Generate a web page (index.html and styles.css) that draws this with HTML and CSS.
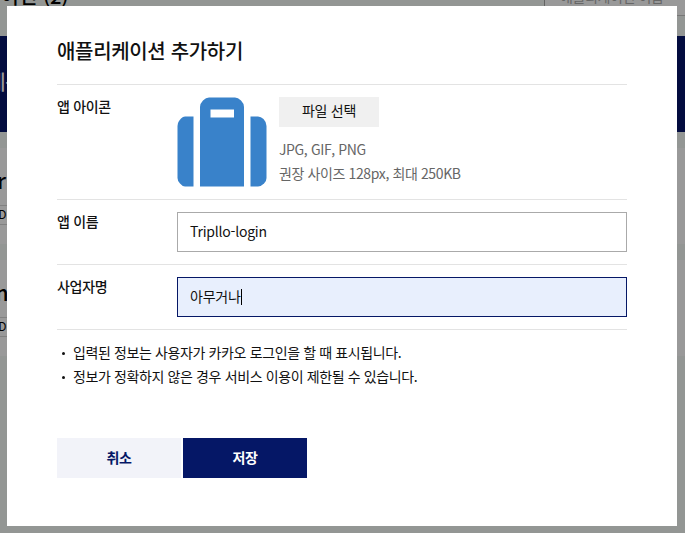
FILE: index.html
```html
<!DOCTYPE html>
<html lang="ko">
<head>
<meta charset="utf-8">
<title>애플리케이션 추가하기</title>
<link rel="stylesheet" href="styles.css">
</head>
<body>
<div class="page">
  <header class="page-head">
    <h1 class="page-title">애플리케이션 (2)</h1>
    <div class="search">애플리케이션 이름</div>
  </header>
  <section class="banner"><span class="banner-text">비즈니스 네구</span></section>
  <main class="apps">
    <article class="app"><div class="app-name">r</div><div class="app-id">ID</div></article>
    <article class="app"><div class="app-name">m</div><div class="app-id">ID</div></article>
  </main>
</div>
<div class="modal" role="dialog">
  <h2 class="modal-title">애플리케이션 추가하기</h2>
  <form class="form">
    <div class="row">
      <div class="label">앱 아이콘</div>
      <div class="field upload">
        <svg class="icon" width="90" height="90" viewBox="0 0 90 90" fill="#3982ca">
          <path d="M16.500 19.500H8Q6 19.500 4 21.500L2 24Q.5 26 .5 29V81Q.5 84 3 86.500Q5.500 89.500 8 89.500H16.500Z"/>
          <path fill-rule="evenodd" d="M32 .5H58Q61 .5 64 3.500Q67 6.500 67 10V89.500H23V10Q23 6.500 26 3.500Q29 .5 32 .5ZM33.500 12.500V20.500H57V12.500Z"/>
          <path d="M73.500 19.500H81Q84 19.500 86.500 22Q89.500 25 89.500 29V81Q89.500 84 87 86.500Q84 89.500 81 89.500H73.500Z"/>
        </svg>
        <div class="upload-info">
          <button class="file-button" type="button">파일 선택</button>
          <p class="hint">JPG, GIF, PNG<br>권장 사이즈 128px, 최대 250KB</p>
        </div>
      </div>
    </div>
    <div class="row">
      <div class="label">앱 이름</div>
      <div class="field input latin">Tripllo-login</div>
    </div>
    <div class="row">
      <div class="label">사업자명</div>
      <div class="field input focused">아무거나<span class="caret"></span></div>
    </div>
  </form>
  <ul class="notes">
    <li>입력된 정보는 사용자가 카카오 로그인을 할 때 표시됩니다.</li>
    <li>정보가 정확하지 않은 경우 서비스 이용이 제한될 수 있습니다.</li>
  </ul>
  <div class="actions">
    <button class="button cancel" type="button">취소</button>
    <button class="button save" type="button">저장</button>
  </div>
</div>
</body>
</html>
```
FILE: styles.css
```css
* { box-sizing: border-box; margin: 0; padding: 0; }
body {
  width: 685px;
  height: 533px;
  overflow: hidden;
  background: #939694;
  color: #111;
  font: 14px/24px "Noto Sans CJK KR", sans-serif;
  letter-spacing: -0.38px;
}
button { border: 0; font: inherit; letter-spacing: inherit; color: inherit; }
.page { height: 533px; overflow: hidden; }
.page-head { display: flex; justify-content: space-between; height: 36px; }
.page-title { margin: -19px 0 0 -73px; font-size: 20px; line-height: 30px; font-weight: 500; letter-spacing: 0; color: #000; white-space: nowrap; }
.search { display: flex; align-items: flex-end; width: 141px; height: 16px; padding: 0 0 7px 15px; background: #999; border-left: 1px solid #636363; border-bottom: 1px solid #777; color: #666; }
.banner { display: flex; align-items: center; height: 96px; background: #030c3f; color: #999; font-size: 20px; }
.banner-text { margin: -4px 0 0 -90px; font-weight: 500; white-space: nowrap; }
.apps { display: flex; flex-direction: column; gap: 16px; padding-top: 16px; }
.app { height: 96px; background: #999; padding-top: 16px; color: #000; }
.app-name { font-size: 22px; line-height: 30px; font-weight: 500; margin-left: -3px; }
.app:nth-child(2) .app-name { margin-left: -12px; }
.app-id { width: 60px; height: 20px; margin: 11px 0 0 -7px; padding-left: 2px; border: solid #818181; border-width: 1px 0; font-size: 12px; line-height: 16px; }
.modal { position: absolute; left: 7px; top: 6px; width: 670px; height: 520px; padding: 30px 50px; background: #fff; }
.modal-title { height: 48px; font-size: 20px; line-height: 30px; font-weight: 500; letter-spacing: -0.33px; }
.row { display: flex; padding: 12px 0; border-top: 1px solid #e3e3e3; }
.row:last-child { border-bottom: 1px solid #e3e3e3; }
.label { width: 120px; line-height: 19px; font-weight: 500; letter-spacing: -0.3px; }
.field { flex: 1; }
.upload { display: flex; gap: 12px; height: 90px; }
.icon { display: block; }
.file-button { display: block; width: 100px; height: 30px; padding-bottom: 4px; line-height: 26px; letter-spacing: -0.3px; background: #f0f0f0; }
.hint { margin-top: 10px; color: #666; }
.input { display: flex; align-items: center; height: 40px; padding: 0 12px 2px; border: 1px solid #aaa; }
.latin { letter-spacing: -0.22px; }
.focused { background: #e8effd; border-color: #051766; letter-spacing: -0.2px; }
.caret { width: 1px; height: 16px; margin-top: 2px; background: #000; }
.notes { margin-top: 10px; list-style: none; }
.notes li { display: flex; align-items: center; padding-left: 5px; }
.notes li::before { content: ""; width: 3px; height: 3px; margin: 2px 8px 0 0; border-radius: 50%; background: #111; }
.actions { display: flex; gap: 2px; margin-top: 50px; }
.button { width: 124px; height: 40px; padding-bottom: 2px; font-weight: 700; }
.cancel { background: #f2f3f9; color: #051766; }
.save { background: #051766; color: #fff; }
```
